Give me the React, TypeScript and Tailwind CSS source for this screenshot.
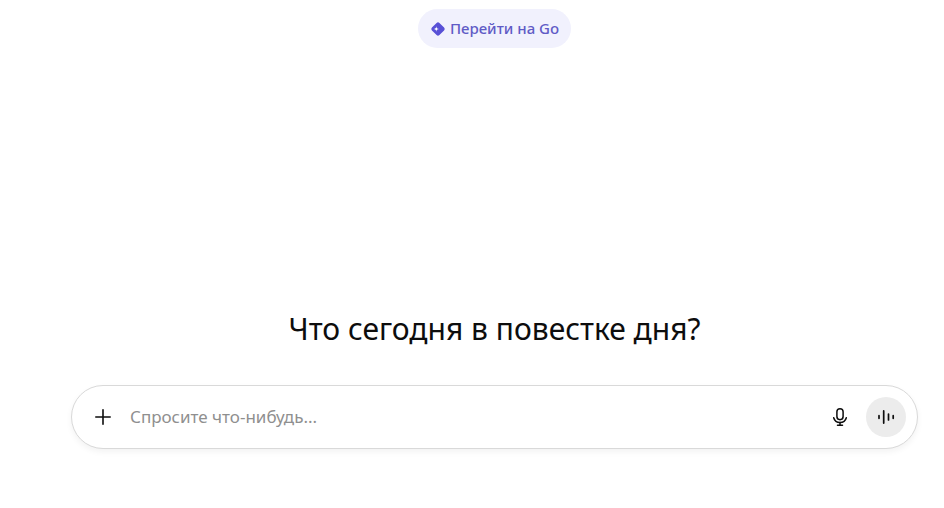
import { useState } from 'react';

function GoIcon() {
  return (
    <svg className="h-4 w-4 shrink-0" viewBox="0 0 16 16" fill="none" aria-hidden="true">
      <rect x="2.7" y="2.7" width="10.6" height="10.6" rx="2" transform="rotate(45 8 8)" fill="#5850d6" />
      <path
        d="M6.3 5.2C6.5 7.2 7.1 7.8 9.1 8C7.1 8.2 6.5 8.8 6.3 10.8C6.1 8.8 5.5 8.2 3.5 8C5.5 7.8 6.1 7.2 6.3 5.2Z"
        fill="#fff"
      />
    </svg>
  );
}

function PlusIcon() {
  return (
    <svg className="h-5 w-5" viewBox="0 0 20 20" fill="none" stroke="currentColor" strokeWidth={1.6} strokeLinecap="round" aria-hidden="true">
      <path d="M10 2.8v14.4M2.8 10h14.4" />
    </svg>
  );
}

function MicIcon() {
  return (
    <svg className="h-5 w-5" viewBox="0 0 20 20" fill="none" stroke="currentColor" strokeWidth={1.5} strokeLinecap="round" aria-hidden="true">
      <rect x="6.9" y="1.7" width="6.2" height="11" rx="3.1" />
      <path d="M3.7 10.8C4.5 13.9 7 15.6 10 15.6S15.5 13.9 16.3 10.8" />
      <path d="M10 15.6v2.6M7.5 18.2h5" />
    </svg>
  );
}

function VoiceIcon() {
  return (
    <svg className="h-5 w-5" viewBox="0 0 20 20" fill="none" stroke="currentColor" strokeWidth={1.7} strokeLinecap="round" aria-hidden="true">
      <path d="M3 8.7v2.6M7.7 3.9v12.2M12.5 7v6M17.2 8.7v2.6" />
    </svg>
  );
}

export default function App() {
  const [prompt, setPrompt] = useState('');

  return (
    <main className="min-h-screen bg-white pt-[9px] pr-[26px] pb-[59px] pl-[71px] font-['Noto_Sans','Open_Sans',sans-serif] text-[#0d0d0d]">
      <div className="flex justify-center">
        <button
          type="button"
          className="flex h-[39px] items-center gap-1 rounded-full bg-[#f1f1fd] px-3 text-[15px] font-medium text-[#605bc6]"
        >
          <GoIcon />
          Перейти на Go
        </button>
      </div>

      <h1 className="mt-[261px] text-center text-3xl leading-10 font-normal">
        Что сегодня в повестке дня?
      </h1>

      <form
        className="mt-9 flex h-16 items-center rounded-full border border-[#d9d9d9] bg-white pr-[11px] pl-[13px] shadow-[0_3px_6px_rgba(0,0,0,0.05)]"
        onSubmit={(e) => e.preventDefault()}
      >
        <button type="button" aria-label="Добавить" className="flex h-9 w-9 items-center justify-center rounded-full">
          <PlusIcon />
        </button>
        <input
          type="text"
          aria-label="Спросите что-нибудь"
          placeholder="Спросите что-нибудь..."
          value={prompt}
          onChange={(e) => setPrompt(e.target.value)}
          className="ml-[9px] min-w-0 flex-1 bg-transparent text-[17px] outline-none placeholder:text-[#8f8f8f]"
        />
        <button type="button" aria-label="Диктовка" className="mr-2 flex h-9 w-9 items-center justify-center rounded-full">
          <MicIcon />
        </button>
        <button type="button" aria-label="Голосовой режим" className="flex h-10 w-10 items-center justify-center rounded-full bg-[#ececec]">
          <VoiceIcon />
        </button>
      </form>
    </main>
  );
}
